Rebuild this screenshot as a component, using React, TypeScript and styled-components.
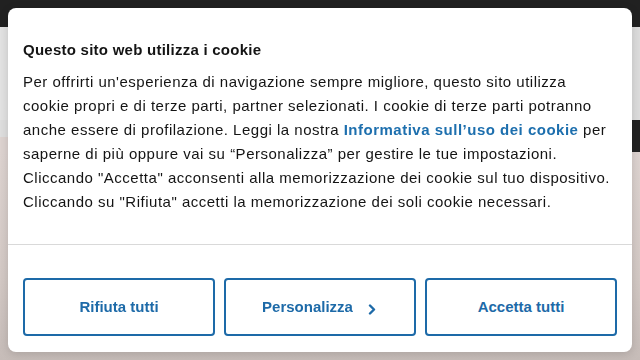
import React from "react";
import styled, { createGlobalStyle } from "styled-components";

const Global = createGlobalStyle`
  html, body { margin: 0; padding: 0; }
  body {
    width: 640px;
    height: 360px;
    overflow: hidden;
    font-family: "Liberation Sans", Arial, sans-serif;
    background: #d6ccc8;
  }
`;

const Page = styled.div`
  width: 640px;
  height: 360px;
  display: flex;
  flex-direction: column;
`;

const TopBar = styled.div`
  height: 27px;
  background: #212121;
`;

const Hero = styled.div`
  height: 93px;
  background: linear-gradient(90deg, #e2e2e2 0%, #dcdcdc 100%);
`;

const NavRow = styled.div`
  height: 32px;
  display: flex;
`;

const NavLeft = styled.div`
  flex: 1;
  display: flex;
  flex-direction: column;
`;

const NavLeftTop = styled.div`
  height: 17px;
  background: #dedede;
`;

const NavLeftBottom = styled.div`
  flex: 1;
  background: #ddd3d0;
`;

const NavDark = styled.div`
  width: 40px;
  background: #232323;
`;

const Lower = styled.div`
  flex: 1;
  background: linear-gradient(180deg, #ddd3d0 0%, #d3c9c5 60%, #c6bcb8 100%);
`;

const Dialog = styled.div`
  position: fixed;
  left: 8px;
  top: 8px;
  width: 624px;
  height: 344px;
  background: #ffffff;
  border-radius: 8px;
  box-shadow: 0 2px 10px rgba(0, 0, 0, 0.15);
  display: flex;
  flex-direction: column;
  box-sizing: border-box;
  overflow: hidden;
`;

const Content = styled.div`
  padding: 33px 20px 0 15px;
  height: 236px;
  box-sizing: border-box;
`;

const Title = styled.h2`
  margin: 0 0 11px 0;
  font-size: 15px;
  font-weight: 700;
  color: #141414;
  line-height: 18px;
  letter-spacing: 0.25px;
`;

const Body = styled.p`
  margin: 0;
  font-size: 15px;
  line-height: 24px;
  color: #141414;
  letter-spacing: 0.5px;
`;

const Link = styled.a`
  color: #1d6fae;
  font-weight: 700;
  text-decoration: none;
`;

const Divider = styled.div`
  height: 1px;
  background: #d9d9d9;
`;

const Actions = styled.div`
  display: grid;
  grid-template-columns: 1fr 1fr 1fr;
  gap: 9px;
  padding: 33px 15px 0 15px;
`;

const Btn = styled.button`
  height: 58px;
  box-sizing: border-box;
  border: 2px solid #1d6aa8;
  border-radius: 4px;
  background: #ffffff;
  color: #1d6aa8;
  font-family: "Liberation Sans", Arial, sans-serif;
  font-size: 15px;
  font-weight: 700;
  display: flex;
  align-items: center;
  justify-content: center;
  gap: 13px;
  padding: 0 0 2px 0;
  cursor: pointer;
`;

const Chevron = styled.svg`
  width: 12px;
  height: 12px;
  margin-top: 5px;
`;

export default function App() {
  return (
    <>
      <Global />
      <Page>
        <TopBar />
        <Hero />
        <NavRow>
          <NavLeft>
            <NavLeftTop />
            <NavLeftBottom />
          </NavLeft>
          <NavDark />
        </NavRow>
        <Lower />
      </Page>
      <Dialog role="dialog">
        <Content>
          <Title>Questo sito web utilizza i cookie</Title>
          <Body>
            Per offrirti un'esperienza di navigazione sempre migliore, questo sito utilizza cookie
            propri e di terze parti, partner selezionati. I cookie di terze parti potranno anche
            essere di profilazione. Leggi la nostra{" "}
            <Link href="#">Informativa sull’uso dei cookie</Link> per saperne di più oppure vai
            su “Personalizza” per gestire le tue impostazioni.
            <br />
            Cliccando "Accetta" acconsenti alla memorizzazione dei cookie sul tuo dispositivo.
            <br />
            Cliccando su "Rifiuta" accetti la memorizzazione dei soli cookie necessari.
          </Body>
        </Content>
        <Divider />
        <Actions>
          <Btn>Rifiuta tutti</Btn>
          <Btn>
            Personalizza
            <Chevron viewBox="0 0 12 12">
              <path d="M4 2.5 L8 6.5 L4 10.5" fill="none" stroke="#1d6aa8" strokeWidth="2.4" strokeLinecap="round" strokeLinejoin="round" />
            </Chevron>
          </Btn>
          <Btn>Accetta tutti</Btn>
        </Actions>
      </Dialog>
    </>
  );
}
